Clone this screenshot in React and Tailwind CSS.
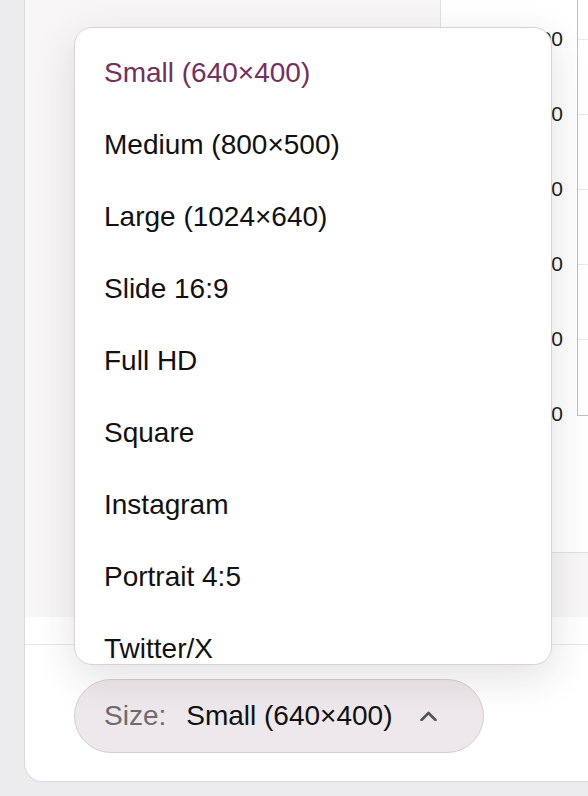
import React from "react";

const items = [
  "Small (640×400)",
  "Medium (800×500)",
  "Large (1024×640)",
  "Slide 16:9",
  "Full HD",
  "Square",
  "Instagram",
  "Portrait 4:5",
  "Twitter/X",
];

const labels = ["100", "80", "60", "40", "20", "0"];

export default function App() {
  return (
    <div className="relative w-[588px] h-[796px] overflow-hidden bg-[#ecebed] font-['Liberation_Sans',Arial,sans-serif]">
      <div className="ml-[24px] h-[782px] bg-white rounded-bl-[18px] border-l border-b border-[#dcd8dc] flex flex-col overflow-hidden">
        <div className="h-[617px] shrink-0 bg-[#f8f6f7] flex">
          <div className="w-[415px] shrink-0" />
          <div className="w-[200px] shrink-0 h-[553px] bg-white border-l border-b border-[#e4dfe3] flex">
            <div className="w-[136px] shrink-0 pt-[27px] pr-[14px] flex flex-col">
              {labels.map((l) => (
                <div key={l} className="h-[75px] shrink-0 text-right text-[21px] leading-[24px] text-[#221c20]">
                  {l}
                </div>
              ))}
            </div>
            <div className="flex-1 h-[416px] border-l border-b border-[#c8bcc5] pt-[39px] flex flex-col">
              {[0, 1, 2, 3, 4].map((i) => (
                <div key={i} className="h-[75px] shrink-0 border-t border-[#ebe7ea]" />
              ))}
            </div>
          </div>
        </div>
        <div className="h-[27px] shrink-0" />
        <div className="flex-1 border-t border-[#e9e6e8] pl-[49px] pt-[34px]">
          <div className="w-[410px] h-[74px] rounded-full bg-[#ede8ec] border border-[#d5ced3] flex items-center pl-[29px] text-[28px] leading-[34px]">
            <span className="text-[#6e6a6d]">Size:</span>
            <span className="ml-[20px] text-[#111]">Small (640×400)</span>
            <svg className="ml-[28px]" width="17" height="10" viewBox="0 0 17 10" fill="none">
              <polyline points="1.5,9 8.5,2 15.5,9" stroke="#555" strokeWidth="2.6" strokeLinecap="round" strokeLinejoin="round" />
            </svg>
          </div>
        </div>
      </div>

      <div className="absolute left-[74px] top-[27px] w-[478px] h-[638px] bg-white rounded-[18px] border border-[#d8d2d7] shadow-[0_12px_40px_rgba(60,40,55,0.14)] overflow-hidden">
        <div className="pt-[9px]">
          {items.map((it, i) => (
            <div
              key={it}
              className={
                "h-[72px] flex items-center pl-[29px] text-[28px] leading-[34px] " +
                (i === 0 ? "text-[#74305e]" : "text-[#111]")
              }
            >
              {it}
            </div>
          ))}
        </div>
      </div>
    </div>
  );
}
